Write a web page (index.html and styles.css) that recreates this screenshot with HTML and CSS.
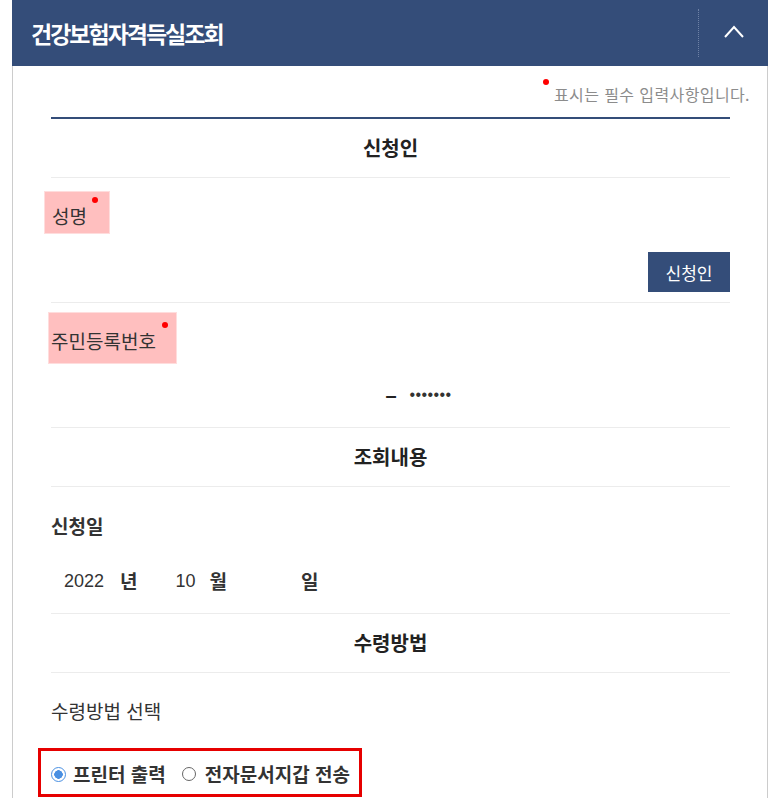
FILE: index.html
```html
<!DOCTYPE html>
<html lang="ko">
<head>
    <meta charset="UTF-8">
    <meta name="viewport" content="width=device-width, initial-scale=1.0">
    <title>건강보험자격득실조회</title>
    <link rel="stylesheet" href="styles.css">
</head>
<body>
    <div class="panel">
        <div class="panel-head">
            <h2 class="panel-title">건강보험자격득실조회</h2>
            <button class="btn-toggle" type="button" aria-label="접기">
                <svg width="20" height="14" viewBox="0 0 20 14"><polyline points="1,12 10,2 19,12" fill="none" stroke="#fff" stroke-width="2"/></svg>
            </button>
        </div>

        <div class="panel-body">
            <p class="note"><span class="req req-note"></span>표시는 필수 입력사항입니다.</p>

            <div class="form">
                <h3 class="sec-title">신청인</h3>

                <div class="row row-name">
                    <label class="label-box label-name">성명<span class="req"></span></label>
                    <div class="btn-row">
                        <button class="btn-navy" type="button">신청인</button>
                    </div>
                </div>

                <div class="row row-id">
                    <label class="label-box label-id">주민등록번호<span class="req"></span></label>
                    <div class="id-row">
                        <span class="id-front"></span>
                        <span class="id-dash">–</span>
                        <span class="id-back">•••••••</span>
                    </div>
                </div>

                <h3 class="sec-title">조회내용</h3>

                <div class="row row-date">
                    <p class="field-label bold">신청일</p>
                    <div class="date-row">
                        <span class="date-val date-year">2022</span>
                        <span class="date-unit">년</span>
                        <span class="date-val date-month">10</span>
                        <span class="date-unit">월</span>
                        <span class="date-val date-day"></span>
                        <span class="date-unit">일</span>
                    </div>
                </div>

                <h3 class="sec-title">수령방법</h3>

                <div class="row row-recv">
                    <p class="field-label">수령방법 선택</p>
                    <div class="radio-box">
                        <label class="radio-item">
                            <input type="radio" name="recv" checked>
                            <span>프린터 출력</span>
                        </label>
                        <label class="radio-item">
                            <input type="radio" name="recv">
                            <span>전자문서지갑 전송</span>
                        </label>
                    </div>
                </div>
            </div>
        </div>
    </div>
</body>
</html>
```

FILE: styles.css
```css
body {
    margin: 0;
    padding: 0;
    font-family: 'Noto Sans CJK KR', sans-serif;
    font-size: 19px;
    color: #333;
    background: #fff;
}
.panel {
    margin-left: 12px;
    width: 756px;
}
.panel-head {
    display: flex;
    align-items: center;
    height: 66px;
    background-color: #344d79;
}
.panel-title {
    flex: 1;
    margin: 0;
    padding-left: 19px;
    font-size: 23px;
    font-weight: 700;
    letter-spacing: -2px;
    color: #fff;
    line-height: 30px;
}
.btn-toggle {
    display: flex;
    align-items: center;
    justify-content: center;
    width: 70px;
    height: 48px;
    margin: 0;
    padding: 0 0 2px;
    border: none;
    border-left: 1px dotted #6f82a6;
    background: transparent;
    cursor: pointer;
}
.panel-body {
    border-left: 1px solid #ccc;
    border-right: 1px solid #ccc;
    padding: 0 37px 0 38px;
}
.note {
    margin: 0 -20px 0 0;
    padding: 17px 0 12px;
    text-align: right;
    font-size: 16px;
    letter-spacing: 0.4px;
    line-height: 22px;
    color: #8c8c8c;
}
.req {
    display: inline-block;
    width: 6px;
    height: 6px;
    border-radius: 50%;
    background-color: #f00;
    vertical-align: top;
    margin-top: -7px;
    margin-left: 5px;
}
.req-note {
    margin: -4px 5px 0 0;
}
.form {
    border-top: 2px solid #344d79;
}
.sec-title {
    margin: 0;
    text-align: center;
    font-size: 20px;
    font-weight: 700;
    color: #222;
    line-height: 58px;
    border-bottom: 1px solid #ececec;
}
.row {
    border-bottom: 1px solid #ececec;
}
.label-box {
    display: inline-block;
    background-color: #ffbfbf;
    border: 1px solid #fdd;
    line-height: 24px;
}
.label-name {
    margin: 13px 0 0 -7px;
    padding: 12px 11px 5px 7px;
}
.label-id {
    margin: 9px 0 0 -3px;
    padding: 16px 8px 10px 2px;
}
.label-id .req {
    margin-left: 6px;
}
.btn-row {
    text-align: right;
    margin-top: 18px;
    padding-bottom: 10px;
}
.btn-navy {
    width: 82px;
    height: 40px;
    border: none;
    background-color: #344d79;
    color: #fff;
    font-family: inherit;
    font-size: 17px;
    vertical-align: top;
    cursor: pointer;
}
.id-row {
    display: flex;
    padding: 20px 0 21px;
    line-height: 22px;
}
.id-front, .id-back {
    flex: 1;
}
.id-dash {
    width: 10px;
    text-align: center;
    font-family: 'Liberation Sans', sans-serif;
    font-weight: 700;
    font-size: 20px;
    color: #222;
}
.id-back {
    text-indent: 14px;
    font-family: 'Liberation Sans', sans-serif;
    font-size: 16px;
    letter-spacing: 0.4px;
}
.field-label {
    margin: 0;
    line-height: 24px;
}
.field-label.bold {
    font-weight: 700;
}
.row-date .field-label {
    padding-top: 27px;
}
.date-row {
    display: flex;
    align-items: center;
    line-height: 24px;
    margin-top: 31px;
    padding-bottom: 20px;
}
.date-val {
    font-family: 'Liberation Sans', sans-serif;
    font-size: 18px;
}
.date-unit {
    font-weight: 700;
}
.date-year {
    margin: 0 16px 0 13px;
}
.date-month {
    margin: 0 14px 0 38px;
}
.date-day {
    width: 74px;
}
.row-recv {
    border-bottom: none;
    padding-bottom: 20px;
}
.row-recv .field-label {
    padding-top: 26px;
}
.radio-box {
    display: inline-flex;
    align-items: center;
    margin: 25px 0 0 -13px;
    padding: 11px 9px 8px 10px;
    border: 3px solid #e60000;
    line-height: 24px;
}
.radio-item {
    display: flex;
    align-items: center;
    font-weight: 700;
}
.radio-item + .radio-item {
    margin-left: 16px;
}
.radio-item input {
    -webkit-appearance: none;
    appearance: none;
    width: 14px;
    height: 14px;
    margin: 0 9px 0 0;
    border: 1px solid #666;
    border-radius: 50%;
    background: #fff;
}
.radio-item input:checked {
    width: 15px;
    height: 15px;
    margin-right: 7px;
    border-color: #4a90e2;
    background: radial-gradient(circle, #4a90e2 0 4px, #fff 4.5px);
}
```
